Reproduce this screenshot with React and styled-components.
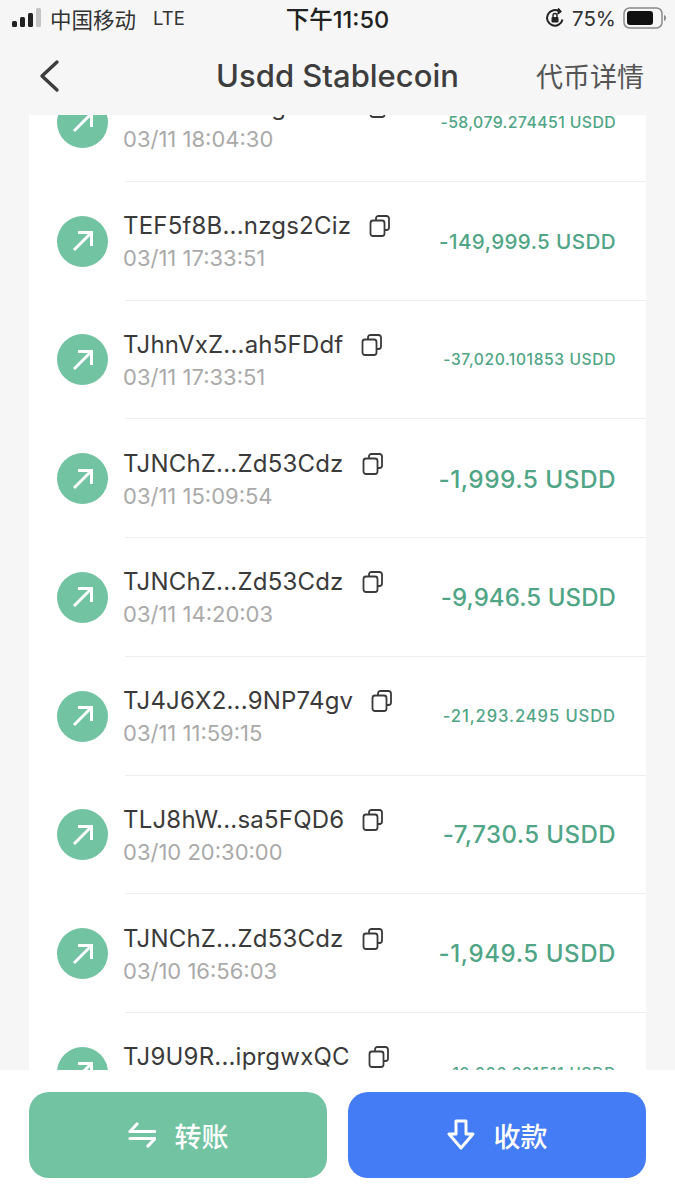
import React from "react";
import styled, { createGlobalStyle } from "styled-components";

const Global = createGlobalStyle`
  html, body { margin: 0; padding: 0; background: #f6f6f6; }
  body { font-family: Inter, "Noto Sans CJK SC", sans-serif; }
`;
const Page = styled.div`
  width: 675px; height: 1200px; overflow: hidden; display: flex; flex-direction: column; background: #f6f6f6;
`;
const StatusBar = styled.div`
  height: 36px; flex: none; display: grid; grid-template-columns: 1fr auto 1fr; align-items: center;
  padding: 0 8px 0 12px; color: #262626; font-size: 20px;
`;
const StatusLeft = styled.div`display: flex; align-items: center; gap: 8px;`;
const Carrier = styled.span`font-size: 21.5px; color: #333;`;
const Lte = styled.span`font-size: 18.5px; margin-left: 9px; color: #333;`;
const Clock = styled.div`font-size: 23.5px; font-weight: 500; color: #222; margin-right: 4px;`;
const StatusRight = styled.div`display: flex; align-items: center; justify-content: flex-end; gap: 7px; font-size: 20.5px; color: #333;`;
const Header = styled.div`
  height: 79px; flex: none; display: grid; grid-template-columns: 1fr auto 1fr; align-items: center;
  padding: 0 31px;
`;
const BackSlot = styled.div`display: flex; padding-left: 7px;`;
const Title = styled.div`font-size: 31px; font-weight: 500; color: #3d3d3d;`;
const HeaderAction = styled.div`justify-self: end; font-size: 27px; color: #555;`;
const Viewport = styled.div`
  flex: 1; min-height: 0; overflow: hidden; padding: 0 29px;
`;
const Card = styled.div`background: #fff; margin-top: -52px;`;
const Row = styled.div`
  height: 118.75px; box-sizing: border-box; display: flex; align-items: center; padding: 0 30px 0 28px; position: relative;
  &::after { content: ""; position: absolute; left: 96px; right: 0; bottom: 0; height: 1px; background: #eeeeee; }
`;
const Avatar = styled.div`
  width: 51px; height: 51px; flex: none; border-radius: 50%; background: #72c3a2; display: flex; align-items: center; justify-content: center;
`;
const Info = styled.div`margin: 2px 0 0 15px; display: flex; flex-direction: column; gap: 4px;`;
const AddressLine = styled.div`display: flex; align-items: center; gap: 18px;`;
const Address = styled.span`font-size: 24px; line-height: 28px; color: #3a3a3a; letter-spacing: 0.2px;`;
const Time = styled.span`font-size: 22px; line-height: 28px; color: #aaaaaa;`;
const Amount = styled.div`
  margin-left: auto; color: #4fa585; font-weight: 500; white-space: nowrap;
  font-size: ${p => p.$size}px; letter-spacing: ${p => p.$track}px;
`;
const Footer = styled.div`
  height: 130px; flex: none; background: #fff; box-sizing: border-box; display: grid; grid-template-columns: 298px 298px; gap: 21px;
  padding: 22px 29px;
`;
const ActionButton = styled.div`
  height: 86px; border-radius: 20px; background: ${p => p.$bg}; color: #fff; display: flex; align-items: center; justify-content: center;
  gap: 19px; font-size: 27px; font-weight: 500;
`;

const Signal = () => (
  <svg width="30" height="20" viewBox="0 0 30 20">
    <rect x="0" y="13" width="5" height="6" rx="1.5" fill="#222" />
    <rect x="8" y="9" width="5" height="10" rx="1.5" fill="#222" />
    <rect x="16" y="5" width="5" height="14" rx="1.5" fill="#222" />
    <rect x="24" y="0" width="5" height="19" rx="1.5" fill="#c4c4c4" />
  </svg>
);
const RotationLock = () => (
  <svg width="20" height="20" viewBox="0 0 20 20" fill="none" stroke="#222" strokeWidth="2">
    <path d="M17.500 11.500A7.800 7.800 0 1 1 14 3.300" />
    <path d="M13 0.500l2.500 3-3 2.200" />
    <rect x="6.500" y="9" width="7" height="5.500" rx="1" fill="#222" stroke="none" />
    <path d="M8 9V7.500a2 2 0 0 1 4 0V9" strokeWidth="1.400" />
  </svg>
);
const Battery = () => (
  <svg width="44" height="22" viewBox="0 0 44 22">
    <rect x="1" y="1" width="38" height="20" rx="5.500" fill="none" stroke="#8a8a8a" strokeWidth="1.500" />
    <rect x="4" y="4" width="26" height="14" rx="3" fill="#111" />
    <path d="M41 8v6c1.500-.5 2-1.700 2-3s-.5-2.500-2-3z" fill="#8a8a8a" />
  </svg>
);
const Back = () => (
  <svg width="24" height="34" viewBox="0 0 24 34" fill="none" stroke="#3d3d3d" strokeWidth="3.400" strokeLinecap="round" strokeLinejoin="round">
    <path d="M19 3L4 17l15 14" />
  </svg>
);
const ArrowOut = () => (
  <svg width="26" height="26" viewBox="0 0 26 26" fill="none" stroke="#fff" strokeWidth="3">
    <path d="M4 22L21 5" />
    <path d="M8 4.500h13.500V18" />
  </svg>
);
const Copy = () => (
  <svg width="22" height="22" viewBox="0 0 22 22" fill="none" stroke="#3a3a3a" strokeWidth="1.800" strokeLinejoin="round">
    <path d="M7 5V3.500A2.500 2.500 0 0 1 9.500 1h8A2.500 2.500 0 0 1 20 3.500v9a2.500 2.500 0 0 1-2.500 2.500H16" />
    <rect x="1.500" y="5.500" width="14" height="15.500" rx="2.500" />
  </svg>
);
const Swap = () => (
  <svg width="28" height="26" viewBox="0 0 28 26" fill="none" stroke="#fff" strokeWidth="3.200" strokeLinecap="round" strokeLinejoin="round">
    <path d="M9 2L2 9.500h25" />
    <path d="M2 16.500h25L20 24" />
  </svg>
);
const Receive = () => (
  <svg width="28" height="32" viewBox="0 0 28 32" fill="none" stroke="#fff" strokeWidth="3" strokeLinejoin="round">
    <path d="M9 2h10v13h7L14 29 2 15h7z" />
  </svg>
);

const rows = [
  ["TEF5f8B...nzgs2Ciz", "03/11 18:04:30", "-58,079.274451 USDD", 15.8, 0.4],
  ["TEF5f8B...nzgs2Ciz", "03/11 17:33:51", "-149,999.5 USDD", 20.6, 0.4],
  ["TJhnVxZ...ah5FDdf", "03/11 17:33:51", "-37,020.101853 USDD", 15.6, 0.6],
  ["TJNChZ...Zd53Cdz", "03/11 15:09:54", "-1,999.5 USDD", 24.4, 0.45],
  ["TJNChZ...Zd53Cdz", "03/11 14:20:03", "-9,946.5 USDD", 24, 0.1],
  ["TJ4J6X2...9NP74gv", "03/11 11:59:15", "-21,293.2495 USDD", 16.6, 0.9],
  ["TLJ8hW...sa5FQD6", "03/10 20:30:00", "-7,730.5 USDD", 24, 0.45],
  ["TJNChZ...Zd53Cdz", "03/10 16:56:03", "-1,949.5 USDD", 24, 0.6],
  ["TJ9U9R...iprgwxQC", "03/10 16:30:12", "-10,006.231511 USDD", 15.2, 0.9],
];

export default function App() {
  return (
    <Page>
      <Global />
      <StatusBar>
        <StatusLeft>
          <Signal />
          <Carrier>中国移动</Carrier>
          <Lte>LTE</Lte>
        </StatusLeft>
        <Clock>下午11:50</Clock>
        <StatusRight>
          <RotationLock />
          <span>75%</span>
          <Battery />
        </StatusRight>
      </StatusBar>
      <Header>
        <BackSlot><Back /></BackSlot>
        <Title>Usdd Stablecoin</Title>
        <HeaderAction>代币详情</HeaderAction>
      </Header>
      <Viewport>
        <Card>
          {rows.map(([address, time, amount, size, track], i) => (
            <Row key={i}>
              <Avatar><ArrowOut /></Avatar>
              <Info>
                <AddressLine>
                  <Address>{address}</Address>
                  <Copy />
                </AddressLine>
                <Time>{time}</Time>
              </Info>
              <Amount $size={size} $track={track}>{amount}</Amount>
            </Row>
          ))}
        </Card>
      </Viewport>
      <Footer>
        <ActionButton $bg="#72c3a2"><Swap /><span>转账</span></ActionButton>
        <ActionButton $bg="#437cf4"><Receive /><span>收款</span></ActionButton>
      </Footer>
    </Page>
  );
}
